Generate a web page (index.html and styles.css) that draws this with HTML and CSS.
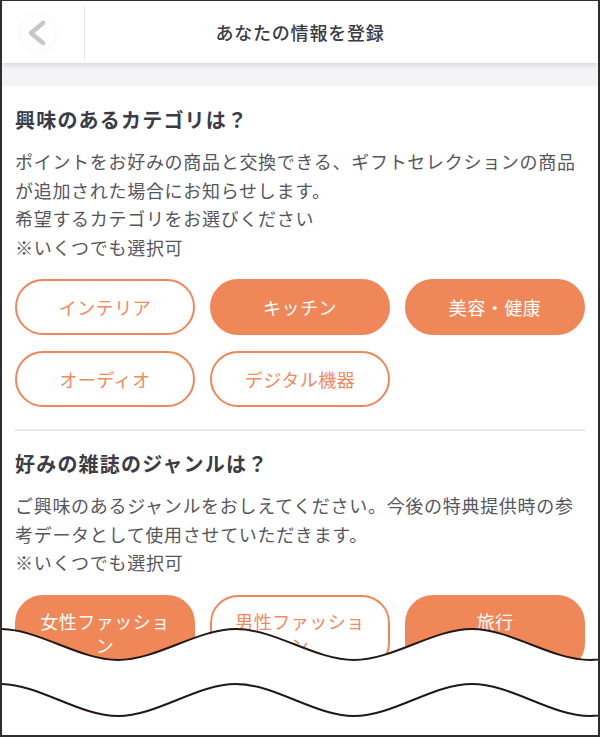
FILE: index.html
```html
<!DOCTYPE html>
<html lang="ja">
<head>
  <meta charset="UTF-8">
  <title>あなたの情報を登録</title>
  <link rel="stylesheet" href="styles.css">
</head>
<body>

  <div class="screen">
    <header class="topbar">
      <div class="back">
        <span class="back-btn">
          <svg width="20" height="26" viewBox="0 0 20 26">
            <polyline points="15,3 3,13 15,23" fill="none" stroke="#c6c6cb" stroke-width="4.5" stroke-linecap="round" stroke-linejoin="round"/>
          </svg>
        </span>
      </div>
      <h1 class="title">あなたの情報を登録</h1>
      <div></div>
    </header>
    <div class="band"></div>

    <main class="content">
      <section class="block">
        <h2 class="q">興味のあるカテゴリは？</h2>
        <p class="desc">ポイントをお好みの商品と交換できる、ギフトセレクションの商品が追加された場合にお知らせします。<br>希望するカテゴリをお選びください<br>※いくつでも選択可</p>
        <div class="chips">
          <button class="chip">インテリア</button>
          <button class="chip on">キッチン</button>
          <button class="chip on">美容・健康</button>
          <button class="chip">オーディオ</button>
          <button class="chip">デジタル機器</button>
        </div>
      </section>

      <hr class="sep">

      <section class="block">
        <h2 class="q">好みの雑誌のジャンルは？</h2>
        <p class="desc">ご興味のあるジャンルをおしえてください。今後の特典提供時の参考データとして使用させていただきます。<br>※いくつでも選択可</p>
        <div class="chips">
          <button class="chip on">女性ファッション</button>
          <button class="chip">男性ファッション</button>
          <button class="chip on">旅行<br>グルメ</button>
        </div>
      </section>
    </main>

    <!-- torn edge: the page continues below -->
    <svg class="cut" width="600" height="115" viewBox="0 0 600 115">
      <path d="M0 4 C39 4 79 35 118 35 S197 4 236 4 S315 35 354 35 S433 4 472 4 S551 35 590 35 S669 4 708 4 L708 115 L0 115 Z" fill="#fff"/>
      <path d="M0 4 C39 4 79 35 118 35 S197 4 236 4 S315 35 354 35 S433 4 472 4 S551 35 590 35 S669 4 708 4" fill="none" stroke="#231815" stroke-width="2"/>
      <path d="M0 59 C39 59 79 91 118 91 S197 59 236 59 S315 91 354 91 S433 59 472 59 S551 91 590 91 S669 59 708 59" fill="none" stroke="#231815" stroke-width="2"/>
    </svg>
  </div>

</body>
</html>
```

FILE: styles.css
```css
body { margin: 0; font-family: "Noto Sans CJK JP", "Noto Sans", sans-serif; }

.screen { position: relative; width: 600px; height: 737px; box-sizing: border-box; border: 2px solid #2e2e2e; border-top-width: 1px; background: #fff; overflow: hidden; }

.topbar { position: relative; z-index: 1; display: grid; grid-template-columns: 83px 1fr 83px; height: 62px; background: #fff; box-shadow: 0 2px 6px rgba(0, 0, 0, .13); }
.back { display: flex; align-items: center; padding-left: 19px; margin: 5px 0 3px; border-right: 1px solid #e7e7e9; }
.back-btn { display: flex; align-items: center; justify-content: center; width: 34px; height: 34px; border-radius: 50%; box-shadow: 0 0 6px rgba(0, 0, 0, .05); }
.title { margin: 0; align-self: center; text-align: center; font-size: 18px; font-weight: 500; letter-spacing: .8px; color: #3b3b45; }

.band { height: 23px; background: #f4f4f6; }

.content { padding: 0 13px; }
.q { margin: 20px 0 0; font-size: 20px; line-height: 28px; font-weight: 700; letter-spacing: 1.2px; color: #3c3c46; }
.desc { margin: 13px 0 0; font-size: 18px; line-height: 28.5px; letter-spacing: .7px; color: #56565e; }

.chips { display: grid; grid-template-columns: repeat(3, 1fr); gap: 16px 15px; margin-top: 18px; }
.chip { min-height: 56px; padding: 12px 20px; border: 2px solid #ef8759; border-radius: 28px; background: #fff; font-family: inherit; font-size: 18px; line-height: 24px; letter-spacing: .5px; color: #ef8a5d; text-align: center; }
.chip.on { background: #ef8759; color: #fff; }

.sep { height: 2px; margin: 22px 0 0; border: 0; background: #e8e8ea; }
.sep + .block .q { margin-top: 19px; }

.cut { position: absolute; left: -2px; top: 624px; }
```
